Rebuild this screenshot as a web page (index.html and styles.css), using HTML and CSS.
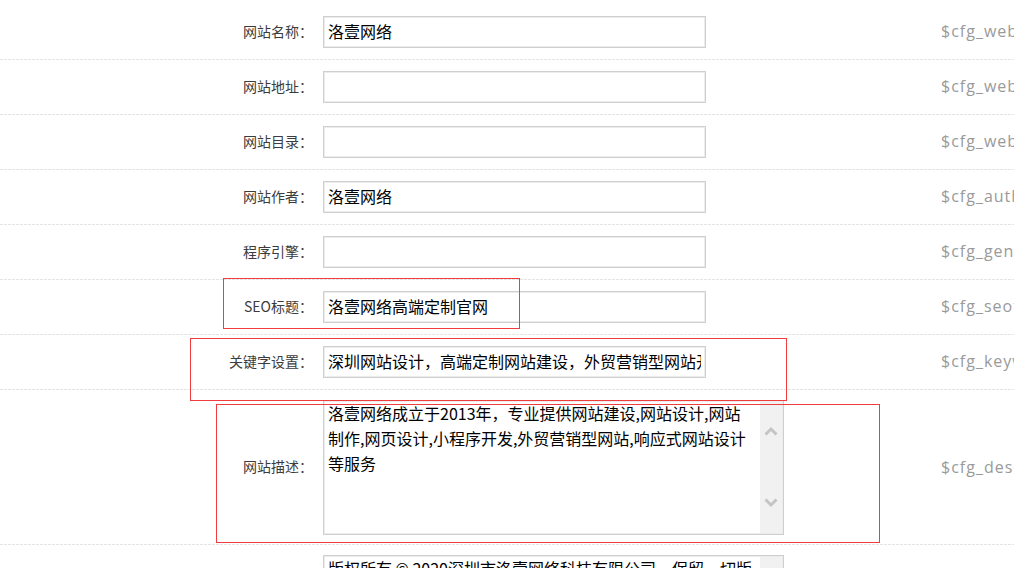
FILE: index.html
```html
<!DOCTYPE html>
<html lang="zh-CN">
<head>
<meta charset="utf-8">
<title>系统设置</title>
<link rel="stylesheet" href="styles.css">
</head>
<body>
<div class="page">
  <div class="form">
    <div class="row">
      <label class="label">网站名称：</label>
      <div class="field"><input class="input" type="text" value="洛壹网络"></div>
      <div class="var">$cfg_webname</div>
    </div>
    <div class="row">
      <label class="label">网站地址：</label>
      <div class="field"><input class="input" type="text" value=""></div>
      <div class="var">$cfg_weburl</div>
    </div>
    <div class="row">
      <label class="label">网站目录：</label>
      <div class="field"><input class="input" type="text" value=""></div>
      <div class="var">$cfg_webpath</div>
    </div>
    <div class="row">
      <label class="label">网站作者：</label>
      <div class="field"><input class="input" type="text" value="洛壹网络"></div>
      <div class="var">$cfg_author</div>
    </div>
    <div class="row">
      <label class="label">程序引擎：</label>
      <div class="field"><input class="input" type="text" value=""></div>
      <div class="var">$cfg_generator</div>
    </div>
    <div class="row">
      <label class="label">SEO标题：</label>
      <div class="field"><input class="input" type="text" value="洛壹网络高端定制官网"></div>
      <div class="var">$cfg_seotitle</div>
    </div>
    <div class="row">
      <label class="label">关键字设置：</label>
      <div class="field"><input class="input" type="text" value="深圳网站设计，高端定制网站建设，外贸营销型网站开发"></div>
      <div class="var">$cfg_keywords</div>
    </div>
    <div class="row row-tall">
      <label class="label">网站描述：</label>
      <div class="field">
        <div class="textbox">
          <textarea class="textarea">洛壹网络成立于2013年，专业提供网站建设,网站设计,网站制作,网页设计,小程序开发,外贸营销型网站,响应式网站设计等服务</textarea>
          <div class="sbar">
            <svg class="chev" width="14" height="10" viewBox="0 0 14 10"><polyline points="1.5,8.5 7,3 12.5,8.5" fill="none" stroke="#c4c4c4" stroke-width="3"/></svg>
            <svg class="chev" width="14" height="10" viewBox="0 0 14 10"><polyline points="1.5,1.5 7,7 12.5,1.5" fill="none" stroke="#c4c4c4" stroke-width="3"/></svg>
          </div>
        </div>
      </div>
      <div class="var">$cfg_description</div>
    </div>
    <div class="row row-tall">
      <label class="label">版权信息：</label>
      <div class="field">
        <div class="textbox">
          <textarea class="textarea">版权所有 © 2020深圳市洛壹网络科技有限公司，保留一切版权</textarea>
          <div class="sbar"></div>
        </div>
      </div>
      <div class="var">$cfg_powerby</div>
    </div>
  </div>
  <div class="mark mark-seo"></div>
  <div class="mark mark-kw"></div>
  <div class="mark mark-desc"></div>
</div>
</body>
</html>
```
FILE: styles.css
```css
html, body {
  margin: 0;
  padding: 0;
  background: #fff;
}
body {
  width: 1014px;
  height: 568px;
  overflow: hidden;
  font-family: "Noto Sans CJK SC", "Open Sans", sans-serif;
}
.page {
  position: relative;
  width: 1014px;
}
.form {
  padding-top: 5px;
}
.row {
  display: grid;
  grid-template-columns: 313px 618px 1fr;
  align-items: center;
  min-height: 54px;
  padding-bottom: 1px;
  background-image: linear-gradient(to right, #e4e4e4 75%, transparent 75%);
  background-size: 4px 1px;
  background-repeat: repeat-x;
  background-position: left bottom;
}
.row-tall {
  padding-top: 10px;
  padding-bottom: 10px;
}
.label {
  text-align: right;
  font-size: 14px;
  line-height: 20px;
  padding-bottom: 3px;
  color: #3c3c3c;
  white-space: nowrap;
}
.field {
  padding-left: 10px;
}
.input {
  display: block;
  box-sizing: border-box;
  width: 383px;
  height: 32px;
  margin: 0;
  border: 1px solid #cfcfcf;
  box-shadow: inset 0 0 0 1px #ececec;
  padding: 0 4px 2px 4px;
  font-family: "Noto Sans CJK SC", "Open Sans", sans-serif;
  font-size: 16px;
  color: #000;
  background: #fff;
  outline: none;
}
.var {
  padding-left: 10px;
  padding-bottom: 2px;
  font-family: "Open Sans", "Noto Sans CJK SC", sans-serif;
  font-size: 16px;
  letter-spacing: 1px;
  color: #9a9a9a;
  white-space: nowrap;
  overflow: hidden;
}
.textbox {
  display: flex;
  box-sizing: border-box;
  width: 461px;
  height: 135px;
  border: 1px solid #cfcfcf;
  box-shadow: inset 0 0 0 1px #ececec;
  background: #fff;
}
.textarea {
  flex: 1;
  margin: 0;
  border: none;
  padding: 0 6px 0 4px;
  resize: none;
  overflow: hidden;
  outline: none;
  background: transparent;
  font-family: "Noto Sans CJK SC", "Open Sans", sans-serif;
  font-size: 16px;
  line-height: 25px;
  color: #000;
}
.sbar {
  width: 22px;
  margin: 1px 1px 1px 0;
  background: #f1f1f1;
  display: flex;
  flex-direction: column;
  justify-content: space-between;
  align-items: center;
  padding: 24px 0 25px;
}
.mark {
  position: absolute;
  box-sizing: border-box;
  border: 1px solid #f03c3c;
  pointer-events: none;
}
.mark-seo {
  left: 223px;
  top: 278px;
  width: 297px;
  height: 51px;
}
.mark-kw {
  left: 190px;
  top: 338px;
  width: 597px;
  height: 63px;
}
.mark-desc {
  left: 216px;
  top: 404px;
  width: 664px;
  height: 139px;
}
```
